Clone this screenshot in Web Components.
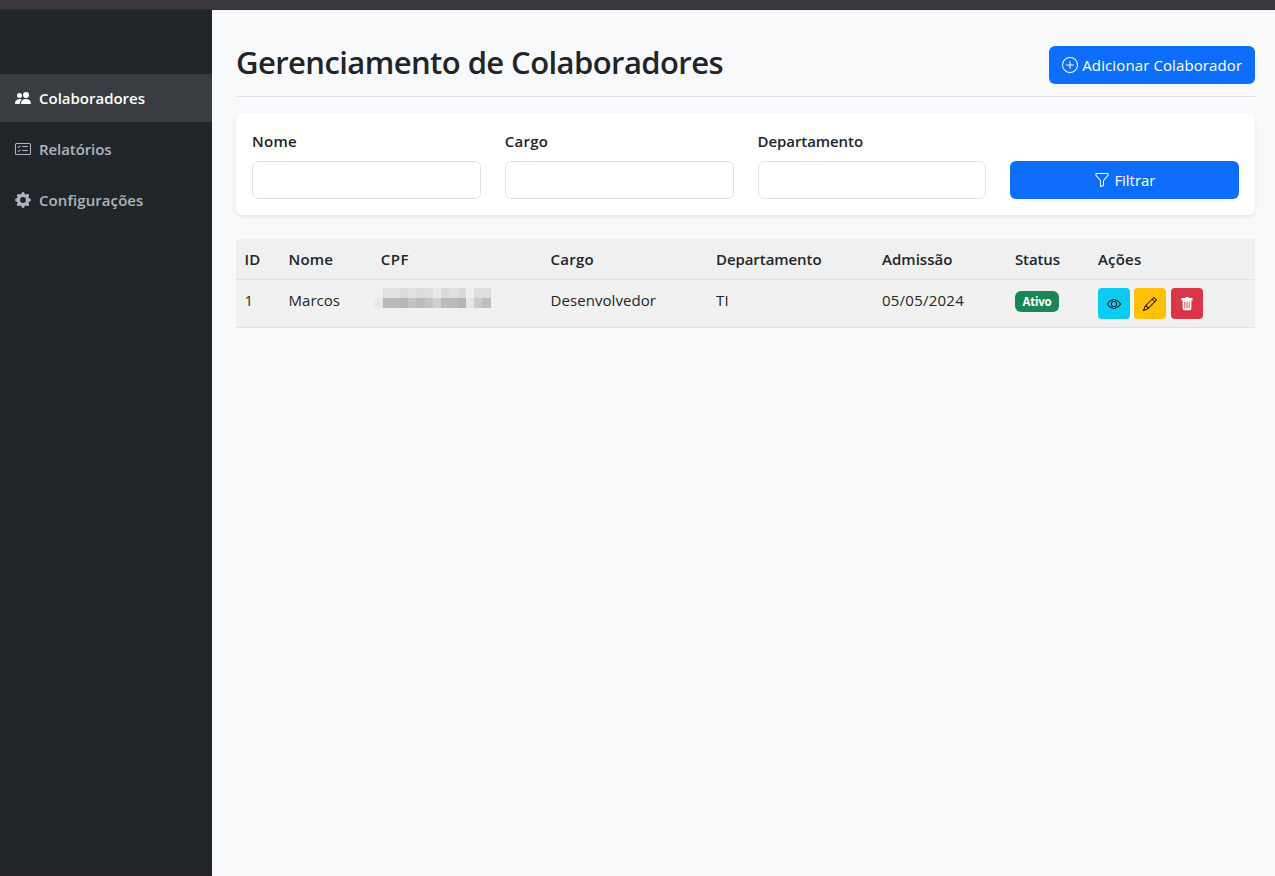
<!DOCTYPE html>
<html lang="pt-BR">
<head>
<meta charset="utf-8">
<title>Gerenciamento de Colaboradores</title>
<style>
html,body{margin:0;height:100%}
body{font:400 15px/24px "Open Sans","Noto Sans",sans-serif;color:#212529;background:#f8f9fb;overflow:hidden}
</style>
</head>
<body>
<app-shell>
  <side-nav slot="nav">
    <nav-item icon="people" active><fit-text w="106">Colaboradores</fit-text></nav-item>
    <nav-item icon="checklist"><fit-text w="72.5">Relatórios</fit-text></nav-item>
    <nav-item icon="gear"><fit-text w="104.5">Configurações</fit-text></nav-item>
  </side-nav>
  <page-header><fit-text w="487">Gerenciamento de Colaboradores</fit-text>
    <ui-button slot="action" icon="plus"><fit-text w="160">Adicionar Colaborador</fit-text></ui-button>
  </page-header>
  <filter-card>
    <filter-field><fit-text w="45">Nome</fit-text></filter-field>
    <filter-field><fit-text w="43.5">Cargo</fit-text></filter-field>
    <filter-field><fit-text w="105.5">Departamento</fit-text></filter-field>
    <ui-button icon="funnel"><fit-text w="41">Filtrar</fit-text></ui-button>
  </filter-card>
  <staff-table></staff-table>
</app-shell>
<script>
const ICONS = {
  people:'<path d="M7 14s-1 0-1-1 1-4 5-4 5 3 5 4-1 1-1 1H7zm4-6a3 3 0 1 0 0-6 3 3 0 0 0 0 6z"/><path d="M5.216 14A2.238 2.238 0 0 1 5 13c0-1.355.68-2.75 1.936-3.72A6.325 6.325 0 0 0 5 9c-4 0-5 3-5 4s1 1 1 1h4.216z"/><path d="M4.5 8a2.5 2.5 0 1 0 0-5 2.5 2.5 0 0 0 0 5z"/>',
  checklist:'<path d="M14.5 3a.5.5 0 0 1 .5.5v9a.5.5 0 0 1-.5.5h-13a.5.5 0 0 1-.5-.5v-9a.5.5 0 0 1 .5-.5h13zm-13-1A1.5 1.5 0 0 0 0 3.5v9A1.5 1.5 0 0 0 1.5 14h13a1.5 1.5 0 0 0 1.5-1.5v-9A1.5 1.5 0 0 0 14.5 2h-13z"/><path d="M7 5.5a.5.5 0 0 1 .5-.5h5a.5.5 0 0 1 0 1h-5a.5.5 0 0 1-.5-.5zm-1.496-.854a.5.5 0 0 1 0 .708l-1.5 1.5a.5.5 0 0 1-.708 0l-.5-.5a.5.5 0 1 1 .708-.708l.146.147 1.146-1.147a.5.5 0 0 1 .708 0zM7 9.5a.5.5 0 0 1 .5-.5h5a.5.5 0 0 1 0 1h-5a.5.5 0 0 1-.5-.5zm-1.496-.854a.5.5 0 0 1 0 .708l-1.5 1.5a.5.5 0 0 1-.708 0l-.5-.5a.5.5 0 0 1 .708-.708l.146.147 1.146-1.147a.5.5 0 0 1 .708 0z"/>',
  gear:'<path d="M9.405 1.05c-.413-1.4-2.397-1.4-2.81 0l-.1.34a1.464 1.464 0 0 1-2.105.872l-.31-.17c-1.283-.698-2.686.705-1.987 1.987l.169.311c.446.82.023 1.841-.872 2.105l-.34.1c-1.4.413-1.4 2.397 0 2.81l.34.1a1.464 1.464 0 0 1 .872 2.105l-.17.31c-.698 1.283.705 2.686 1.987 1.987l.311-.169a1.464 1.464 0 0 1 2.105.872l.1.34c.413 1.4 2.397 1.4 2.81 0l.1-.34a1.464 1.464 0 0 1 2.105-.872l.31.17c1.283.698 2.686-.705 1.987-1.987l-.169-.311a1.464 1.464 0 0 1 .872-2.105l.34-.1c1.4-.413 1.4-2.397 0-2.81l-.34-.1a1.464 1.464 0 0 1-.872-2.105l.17-.31c.698-1.283-.705-2.686-1.987-1.987l-.311.169a1.464 1.464 0 0 1-2.105-.872l-.1-.34zM8 10.93a2.929 2.929 0 1 1 0-5.86 2.929 2.929 0 0 1 0 5.858z"/>',
  plus:'<path d="M8 15A7 7 0 1 1 8 1a7 7 0 0 1 0 14zm0 1A8 8 0 1 0 8 0a8 8 0 0 0 0 16z"/><path d="M8 4a.5.5 0 0 1 .5.5v3h3a.5.5 0 0 1 0 1h-3v3a.5.5 0 0 1-1 0v-3h-3a.5.5 0 0 1 0-1h3v-3A.5.5 0 0 1 8 4z"/>',
  funnel:'<path d="M1.5 1.5A.5.5 0 0 1 2 1h12a.5.5 0 0 1 .5.5v2a.5.5 0 0 1-.128.334L10 8.692V13.5a.5.5 0 0 1-.342.474l-3 1A.5.5 0 0 1 6 14.5V8.692L1.628 3.834A.5.5 0 0 1 1.5 3.5v-2zm1 .5v1.308l4.372 4.858A.5.5 0 0 1 7 8.5v5.306l2-.666V8.5a.5.5 0 0 1 .128-.334L13.5 3.308V2h-11z"/>',
  eye:'<path d="M16 8s-3-5.500-8-5.500S0 8 0 8s3 5.500 8 5.500S16 8 16 8zM1.173 8a13.133 13.133 0 0 1 1.660-2.043C4.120 4.668 5.880 3.500 8 3.500c2.120 0 3.879 1.168 5.168 2.457A13.133 13.133 0 0 1 14.828 8c-.058.087-.122.183-.195.288-.335.480-.830 1.120-1.465 1.755C11.879 11.332 10.119 12.500 8 12.500c-2.120 0-3.879-1.168-5.168-2.457A13.134 13.134 0 0 1 1.172 8z"/><path d="M8 5.500a2.500 2.500 0 1 0 0 5 2.500 2.500 0 0 0 0-5zM4.500 8a3.500 3.500 0 1 1 7 0 3.500 3.500 0 0 1-7 0z"/>',
  pencil:'<path d="M12.146.146a.5.5 0 0 1 .708 0l3 3a.5.5 0 0 1 0 .708l-10 10a.5.5 0 0 1-.168.110l-5 2a.5.5 0 0 1-.650-.650l2-5a.5.5 0 0 1 .110-.168l10-10zM11.207 2.500 13.500 4.793 14.793 3.500 12.500 1.207 11.207 2.500zm1.586 3L10.500 3.207 4 9.707V10h.5a.5.5 0 0 1 .5.5v.5h.5a.5.5 0 0 1 .5.5v.5h.293l6.500-6.500zm-9.761 5.175-.106.106-1.528 3.821 3.821-1.528.106-.106A.5.5 0 0 1 5 12.500V12h-.5a.5.5 0 0 1-.5-.5V11h-.5a.5.5 0 0 1-.468-.325z"/>',
  trash:'<path d="M2.500 1a1 1 0 0 0-1 1v1a1 1 0 0 0 1 1H3v9a2 2 0 0 0 2 2h6a2 2 0 0 0 2-2V4h.5a1 1 0 0 0 1-1V2a1 1 0 0 0-1-1H10a1 1 0 0 0-1-1H7a1 1 0 0 0-1 1H2.500zm3 4a.5.5 0 0 1 .5.5v7a.5.5 0 0 1-1 0v-7a.5.5 0 0 1 .5-.5zM8 5a.5.5 0 0 1 .5.5v7a.5.5 0 0 1-1 0v-7A.5.5 0 0 1 8 5zm3 .5v7a.5.5 0 0 1-1 0v-7a.5.5 0 0 1 1 0z"/>'
};
const icon = (name, size = 16) => `<svg width="${size}" height="${size}" viewBox="0 0 16 16" fill="currentColor">${ICONS[name]}</svg>`;
const define = (tag, render) => customElements.define(tag, class extends HTMLElement {
  connectedCallback() {
    if (!this.shadowRoot) this.attachShadow({mode:'open'}).innerHTML = render(this);
  }
});

define('app-shell', () => `<style>
  :host{display:grid;grid-template:10px 1fr/212px 1fr;height:100vh}
  .top{grid-column:1/3;background:#3b393f;border-bottom:1px solid #302f35;box-sizing:border-box}
  main{padding:36px 20px 0 24px;min-width:0}
  </style><div class="top"></div><slot name="nav"></slot><main><slot></slot></main>`);

define('side-nav', () => `<style>
  :host{display:flex;flex-direction:column;gap:3px;padding-top:64px;background:#212529;border-bottom:1px solid #2a2027}
  </style><slot></slot>`);

define('nav-item', el => `<style>
  :host{display:flex;align-items:center;gap:8px;height:48px;padding:0 15px;color:#adb5bd;font-weight:600}
  :host([active]){background:#393c40;color:#fff}
  svg{display:block}
  </style>${icon(el.getAttribute('icon'))}<slot></slot>`);

define('page-header', () => `<style>
  :host{display:flex;justify-content:space-between;align-items:flex-start;height:50px;border-bottom:1px solid #dee2e6;margin-bottom:16px}
  h1{margin:-3px 0 0;font-size:31px;line-height:38px;font-weight:600}
  </style><h1><slot></slot></h1><slot name="action"></slot>`);

define('ui-button', el => `<style>
  :host{display:flex;align-items:center;justify-content:center;gap:4.5px;height:38px;padding:0 12.75px;box-sizing:border-box;border-radius:6px;background:#0d6efd;color:#fff}
  svg{display:block}
  </style>${icon(el.getAttribute('icon'))}<slot></slot>`);

define('filter-card', () => `<style>
  :host{display:grid;grid-template-columns:repeat(4,1fr);gap:24px;align-items:end;padding:16px;background:#fff;border-radius:6px;box-shadow:0 2px 4px rgba(0,0,0,.075);height:102px;box-sizing:border-box;margin-bottom:24px}
  </style><slot></slot>`);

define('filter-field', () => `<style>
  :host{display:block;font-weight:600}
  label{display:block;margin-bottom:8px}
  input{display:block;width:100%;height:38px;box-sizing:border-box;border:1px solid #dee2e6;border-radius:6px;background:#fff}
  </style><label><slot></slot></label><input type="text">`);

define('status-badge', () => `<style>
  :host{display:block;width:44px;height:21px;margin-top:3px;border-radius:6px;background:#198754;color:#fff;font-size:11.5px;font-weight:700;line-height:21px;text-align:center}
  </style><slot></slot>`);

define('action-button', el => `<style>
  :host{display:flex;align-items:center;justify-content:center;width:32px;height:31px;border-radius:4px;background:var(--bg);color:var(--fg,#000)}
  </style>${icon(el.getAttribute('icon'), 14)}`);

define('redacted-value', () => {
  const top = ['#f1f1f1','#e0e1e1','#e1e1e1','#dbdcde','#e2e0df','#dadcde','#dededf','#e8e9e9','#dadbdd','#e1e1e2','#dadada','#f1efee','#dddede','#dddedf'];
  const low = ['#ebe9e7','#b9babb','#bababa','#b5b6b9','#c5c3c2','#babcc0','#c4c4c4','#cfd0d0','#babbbc','#babbbc','#b4b5b6','#e7e7e8','#cfcac7','#babfc4'];
  return `<style>
  :host{display:grid;grid-template-columns:9px repeat(10,8.3px) 8px 8px 9px;grid-auto-rows:10px;margin-left:-6.5px;width:117px}
  </style>${[...top, ...low].map(c => `<i style="background:${c}"></i>`).join('')}`;
});

define('staff-table', () => {
  const head = [['ID',16],['Nome',44.5],['CPF',28],['Cargo',43.5],['Departamento',105.5],['Admissão',70.5],['Status',45],['Ações',43.5]];
  const t = (s, w) => `<fit-text w="${w}">${s}</fit-text>`;
  return `<style>
  :host{display:block}
  .row{display:grid;grid-template-columns:44.5px 92.3px 169.7px 165.5px 166px 133px 83px 1fr;background:#f1f1f1;border-bottom:1px solid #dee2e6;box-sizing:border-box;height:48px}
  .head{height:41px;font-weight:600;background:#f0f0f0}
  .row>div{padding:8px}
  .row>div:first-child{padding-left:8.5px}
  .actions{display:flex;gap:4.4px}
  </style>
  <div class="row head">${head.map(([s, w]) => `<div>${t(s, w)}</div>`).join('')}</div>
  <div class="row">
    <div>1</div><div>${t('Marcos',51.5)}</div><div><redacted-value></redacted-value></div>
    <div>${t('Desenvolvedor',105.5)}</div><div>${t('TI',13)}</div><div>${t('05/05/2024',82)}</div>
    <div><status-badge>${t('Ativo',29)}</status-badge></div>
    <div class="actions">
      <action-button icon="eye" style="--bg:#0dcaf0"></action-button>
      <action-button icon="pencil" style="--bg:#ffc107"></action-button>
      <action-button icon="trash" style="--bg:#dc3545;--fg:#fff"></action-button>
    </div>
  </div>`;
});

/* A label whose tracking is adjusted to fill the width given in "w". */
customElements.define('fit-text', class extends HTMLElement {
  connectedCallback() {
    if (!this.shadowRoot) this.attachShadow({mode:'open'}).innerHTML =
      '<style>:host{display:inline-block;white-space:nowrap}</style><slot></slot>';
    const w = parseFloat(this.getAttribute('w'));
    const natural = this.getBoundingClientRect().width;
    this.style.letterSpacing = (w - natural) / this.textContent.length + 'px';
  }
});
</script>
</body>
</html>
